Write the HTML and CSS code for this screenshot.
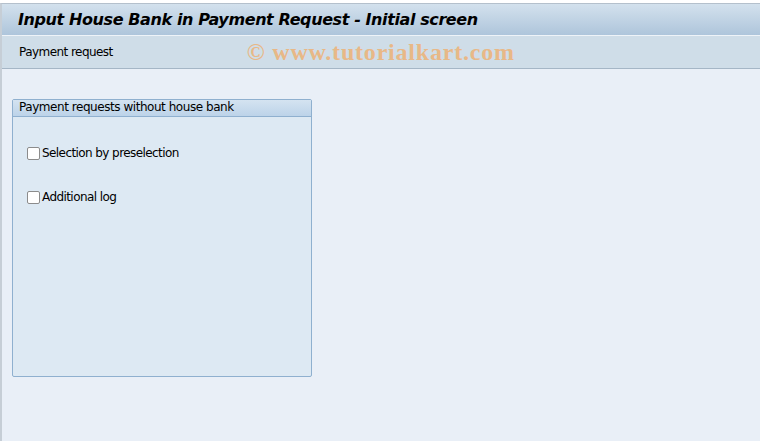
FILE: index.html
```html
<!DOCTYPE html>
<html lang="en">
<head>
    <meta charset="UTF-8">
    <title>Input House Bank in Payment Request - Initial screen</title>
    <link rel="stylesheet" href="styles.css">
</head>
<body>
    <div class="screen">
        <div class="title-bar">
            <h1>Input House Bank in Payment Request - Initial screen</h1>
        </div>
        <div class="toolbar">
            <span class="tool">Payment request</span>
            <span class="watermark">&copy; www.tutorialkart.com</span>
        </div>
        <div class="content">
            <div class="group">
                <div class="group-title">Payment requests without house bank</div>
                <div class="group-body">
                    <label class="check"><span class="box"></span>Selection by preselection</label>
                    <label class="check"><span class="box"></span>Additional log</label>
                </div>
            </div>
        </div>
    </div>
</body>
</html>
```

FILE: styles.css
```css
html, body {
    margin: 0;
    padding: 0;
    height: 100%;
}
body {
    background-color: #ffffff;
    font-family: 'DejaVu Sans', Tahoma, sans-serif;
    color: #000;
}
.screen {
    height: 438px;
    margin-top: 3px;
    border-left: 2px solid #c6ced6;
    border-top: 1px solid #b4c0cc;
    background-color: #e9eff7;
    display: flex;
    flex-direction: column;
}
.title-bar {
    height: 31px;
    background: linear-gradient(to bottom, #d3e1ed, #aec5db);
    border-bottom: 1px solid #eef3f8;
    display: flex;
    align-items: center;
    padding-left: 16px;
}
.title-bar h1 {
    margin: 0;
    margin-top: -1px;
    font-size: 16px;
    font-weight: bold;
    font-style: italic;
    letter-spacing: -0.4px;
    color: #000;
}
.toolbar {
    height: 32px;
    background-color: #cfdde8;
    border-bottom: 1px solid #a5b6c6;
    display: flex;
    align-items: center;
    padding-left: 17px;
}
.tool {
    font-size: 12px;
    letter-spacing: -0.55px;
}
.watermark {
    margin-left: 134px;
    font-family: 'Liberation Serif', serif;
    font-weight: bold;
    font-size: 24px;
    letter-spacing: 0.8px;
    color: #e8b887;
}
.content {
    flex: 1;
    padding: 30px 0 0 10px;
}
.group {
    width: 298px;
    height: 276px;
    border: 1px solid #8fb0cf;
    border-radius: 2px;
    background-color: #dde9f3;
    display: flex;
    flex-direction: column;
}
.group-title {
    height: 16px;
    line-height: 15px;
    padding-left: 6px;
    font-size: 12px;
    letter-spacing: -0.45px;
    background: linear-gradient(to bottom, #d4e3f1, #bcd3e9);
    border-bottom: 1px solid #8fb0cf;
}
.group-body {
    display: flex;
    flex-direction: column;
    gap: 28px;
    padding: 28px 0 0 14px;
}
.check {
    display: flex;
    align-items: center;
    font-size: 12px;
    letter-spacing: -0.58px;
    height: 16px;
}
.box {
    width: 11px;
    height: 11px;
    border: 1px solid #8c8c8c;
    border-radius: 2px;
    background-color: #ffffff;
    margin-right: 2px;
}
```
